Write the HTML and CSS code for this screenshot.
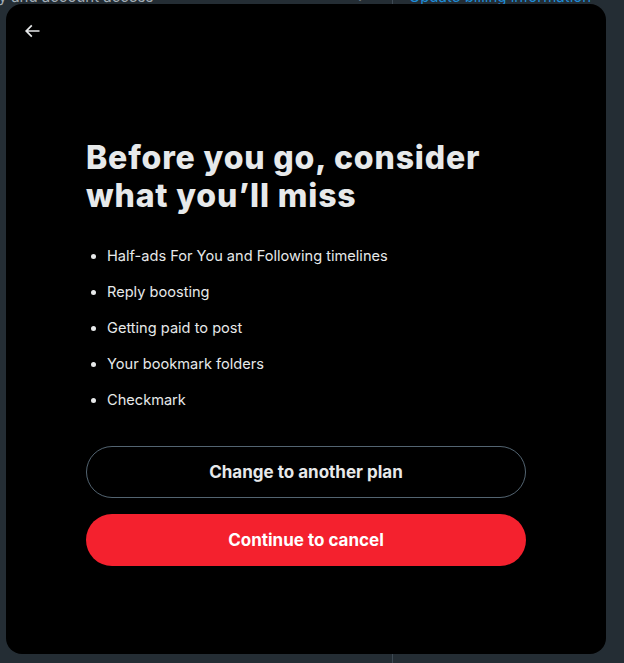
FILE: index.html
```html
<!DOCTYPE html>
<html lang="en">

<head>
  <meta charset="UTF-8">
  <meta name="viewport" content="width=device-width, initial-scale=1.0">
  <title>Cancel subscription</title>

  <link rel="stylesheet" href="styles.css">

</head>

<body>
  <div class="latar">
    <div class="kolom-kiri">
      <span>Security and account access</span>
      <span class="panah-kanan">&rsaquo;</span>
    </div>
    <div class="kolom-kanan">
      <span class="tautan">Update billing information</span>
    </div>
  </div>

  <div class="modal">
    <div class="modal-atas">
      <button type="button" class="kembali" aria-label="Back">
        <svg viewBox="0 0 24 24" width="20" height="20">
          <path d="M7.414 13l5.043 5.04-1.414 1.42L3.586 12l7.457-7.46 1.414 1.42L7.414 11H21v2H7.414z"></path>
        </svg>
      </button>
    </div>

    <div class="isi">
      <h1>Before you go, consider what you’ll miss</h1>

      <ul class="daftar">
        <li>Half-ads For You and Following timelines</li>
        <li>Reply boosting</li>
        <li>Getting paid to post</li>
        <li>Your bookmark folders</li>
        <li>Checkmark</li>
      </ul>

      <button type="button" class="tombol garis">Change to another plan</button>
      <button type="button" class="tombol merah">Continue to cancel</button>
    </div>
  </div>
</body>

</html>
```

FILE: styles.css
```css
body {
  margin: 0;
  width: 624px;
  height: 663px;
  overflow: hidden;
  background: #242d34;
  font-family: Inter, "Liberation Sans", sans-serif;
  position: relative;
}

.latar {
  display: flex;
  margin-top: -12px;
  height: 675px;
}

.kolom-kiri {
  width: 445px;
  margin-left: -52px;
  border-right: 1px solid #3e4a54;
  display: flex;
  justify-content: space-between;
  padding: 0 28px 0 0;
  box-sizing: border-box;
  color: #a3adb6;
  font-size: 15px;
  line-height: 18px;
}

.panah-kanan {
  color: #6e7a84;
}

.kolom-kanan {
  padding-left: 16px;
  font-size: 15px;
  line-height: 18px;
}

.tautan {
  color: #1d8cd8;
}

.modal {
  position: absolute;
  left: 6px;
  top: 4px;
  width: 600px;
  height: 650px;
  background: #000;
  border-radius: 16px;
  box-sizing: border-box;
}

.modal-atas {
  height: 53px;
  padding: 0 8px;
  display: flex;
  align-items: center;
}

.kembali {
  width: 36px;
  height: 36px;
  border: none;
  background: none;
  padding: 0;
  display: flex;
  align-items: center;
  justify-content: center;
  fill: #e7e9ea;
}

.isi {
  padding: 82px 80px 0;
}

h1 {
  margin: 0;
  max-width: 420px;
  color: #e7e9ea;
  font-size: 32px;
  line-height: 38px;
  font-weight: 800;
  letter-spacing: 0.85px;
}

.daftar {
  margin: 31px 0 36px;
  padding: 0 0 0 21px;
  color: #e7e9ea;
  font-size: 14.6px;
  line-height: 20px;
}

.daftar li {
  margin-bottom: 16px;
}

.daftar li:last-child {
  margin-bottom: 0;
}

.tombol {
  display: block;
  width: 440px;
  height: 52px;
  border-radius: 26px;
  font-family: Inter, "Liberation Sans", sans-serif;
  font-size: 17px;
  font-weight: 700;
  color: #e7e9ea;
  cursor: pointer;
}

.garis {
  background: #000;
  border: 1px solid #536471;
  margin-bottom: 16px;
}

.merah {
  background: #f4212e;
  border: none;
  color: #fff;
}
```
